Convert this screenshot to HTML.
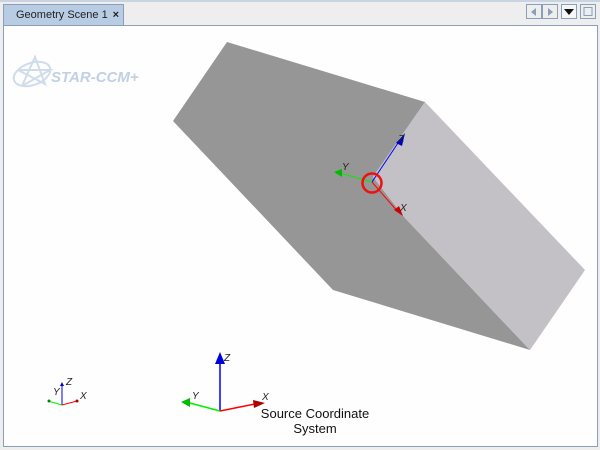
<!DOCTYPE html>
<html><head><style>
body{margin:0;width:600px;height:450px;background:#eeeeee;font-family:"Liberation Sans",sans-serif;overflow:hidden;position:relative}
.tabbar{position:absolute;left:0;top:0;width:600px;height:28px;background:#eeeeee;border-top:2px solid #c8d4e2;box-sizing:border-box}
.tab{position:absolute;left:3px;top:4px;width:121px;height:21px;background:#b8cde4;border:1px solid #8a9fb8;border-bottom:none;box-sizing:border-box;font-size:11px;color:#222;line-height:20px;padding-left:12px;white-space:nowrap}
.tab b{position:absolute;right:4px;top:0;font-size:11px}
.content{position:absolute;left:3px;top:25px;width:595px;height:422px;background:#fdfefd;border:1px solid #8a9fb8;box-sizing:border-box}
.btn{position:absolute;top:4px;width:16px;height:15px;border:1px solid #8a9fb8;box-sizing:border-box;background:#eeeeee}
</style></head><body>
<div class="tabbar"></div>
<div class="content"></div>
<div class="tab">Geometry Scene 1<b>×</b></div>
<div class="btn" style="left:526px"><svg width="14" height="13"><polygon points="9,3 4,7 9,11" fill="#8a9fb8"/></svg></div>
<div class="btn" style="left:542px"><svg width="14" height="13"><polygon points="5,3 10,7 5,11" fill="#8a9fb8"/></svg></div>
<div class="btn" style="left:561px;background:#f4f6f8"><svg width="14" height="13"><polygon points="2,4 12,4 7,10" fill="#111"/></svg></div>
<div class="btn" style="left:580px"><svg width="14" height="13"><rect x="3" y="2.5" width="8" height="8" fill="none" stroke="#8a9fb8"/></svg></div>
<svg style="position:absolute;left:0;top:0" width="600" height="450">
<g opacity="0.6" stroke="#b4c6de" fill="none" stroke-width="2">
<ellipse cx="32" cy="74" rx="19" ry="11" transform="rotate(-20 32 74)"/>
<polyline points="22,86 35,57 45,84 18,70 50,70 22,86"/>
</g>
<text x="51" y="82" font-size="15" font-weight="bold" font-style="italic" fill="#c3d0e4">STAR-CCM+</text>
<polygon points="227,42 425,102 373,177 405,218 530,350 333,290 173,121" fill="#969696"/>
<polygon points="425,102 585,270 530,350 405,218 373,177" fill="#c3c1c5"/>
<line x1="372" y1="182" x2="400" y2="140" stroke="#0000ff"/>
<polygon points="396,143 405,133 402,146" fill="#0000cc"/>
<line x1="372" y1="182" x2="340" y2="173" stroke="#00ee00"/>
<polygon points="342,169 334,172 342,177" fill="#00bb00"/>
<line x1="372" y1="182" x2="398" y2="212" stroke="#ff0000"/>
<polygon points="394,210 403,216 399,206" fill="#cc0000"/>
<circle cx="372" cy="183" r="9.5" fill="none" stroke="#ee1111" stroke-width="2.5"/>
<g font-size="10" font-style="italic" fill="#222">
<text x="398" y="142">Z</text><text x="342" y="170">Y</text><text x="400" y="211">X</text>
<text x="66" y="385">Z</text><text x="53" y="395">Y</text><text x="80" y="399">X</text>
<text x="224" y="361">Z</text><text x="192" y="399">Y</text><text x="262" y="400">X</text>
</g>
<line x1="62" y1="405" x2="62" y2="383" stroke="#0000ff"/><polygon points="60,386 62,382 64,386" fill="#0000cc"/>
<line x1="62" y1="405" x2="48" y2="401" stroke="#00ee00"/><circle cx="49" cy="401" r="1.5" fill="#008800"/>
<line x1="62" y1="405" x2="77" y2="401" stroke="#ff0000"/><circle cx="77" cy="401" r="1.5" fill="#aa0000"/>
<line x1="220" y1="411" x2="220" y2="360" stroke="#0000ff" stroke-width="1.5"/><polygon points="215,364 220,352 225,364" fill="#0000dd"/>
<line x1="220" y1="411" x2="186" y2="402" stroke="#00ee00" stroke-width="1.5"/><polygon points="190,398 181,402 190,407" fill="#00bb00"/>
<line x1="220" y1="411" x2="255" y2="404" stroke="#ff0000" stroke-width="1.5"/><polygon points="253,400 265,403 254,408" fill="#aa0000"/>
<text x="315" y="418" font-size="13" fill="#111" text-anchor="middle">Source Coordinate</text>
<text x="315" y="433" font-size="13" fill="#111" text-anchor="middle">System</text>
</svg>
</body></html>
